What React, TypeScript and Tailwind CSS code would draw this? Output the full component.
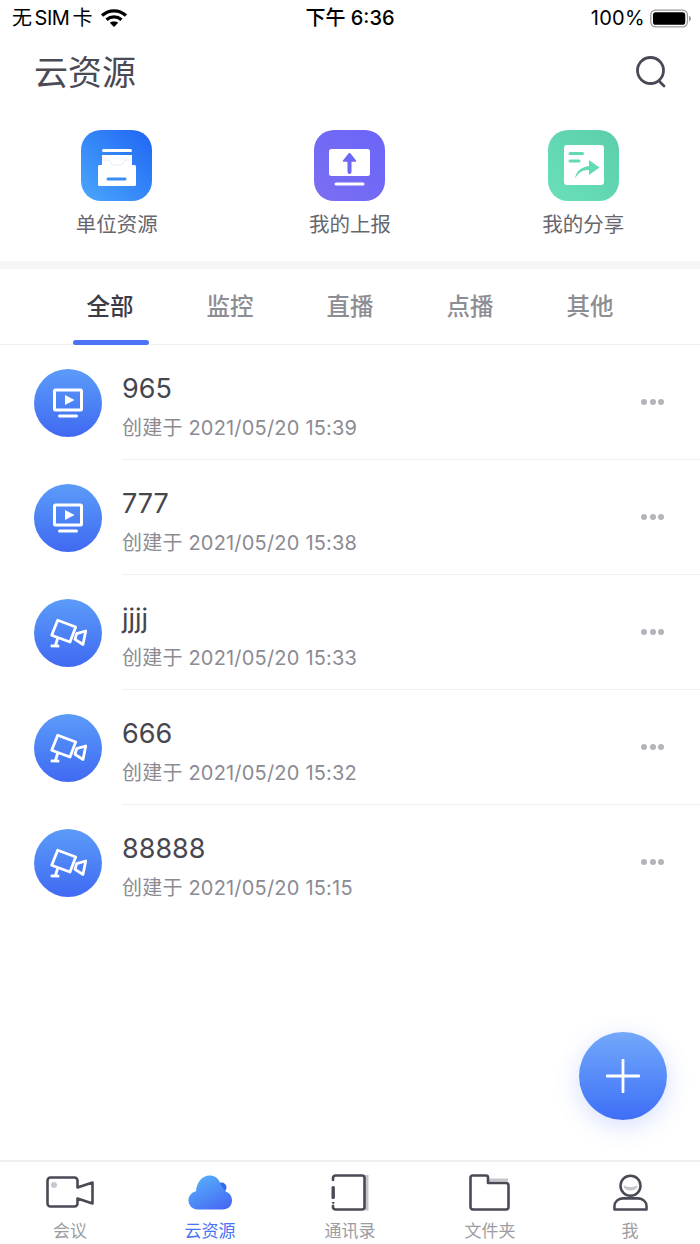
const font = 'font-["Inter","Noto_Sans_CJK_SC",sans-serif]';

function Wifi() {
  return (
    <svg width="28" height="20" viewBox="0 0 28 20" fill="none" stroke="#000" strokeWidth="3.2">
      <path d="M2 7.500C9 1.200 19 1.200 26 7.500" />
      <path d="M6.500 11.800C11 8 17 8 21.500 11.800" />
      <path d="M14 19L9.800 14.800C12 13 16 13 18.200 14.800Z" fill="#000" stroke="none" />
    </svg>
  );
}

function Battery() {
  return (
    <svg width="42" height="19" viewBox="0 0 44 20">
      <rect x="0.700" y="1.200" width="38.600" height="17.600" rx="5" fill="none" stroke="#9a9a9a" strokeWidth="1.300" />
      <rect x="3" y="3.400" width="34" height="13.200" rx="3" fill="#000" />
      <path d="M41 7v6c1.200-.4 2-1.600 2-3s-.8-2.600-2-3z" fill="#9a9a9a" />
    </svg>
  );
}

function SearchIcon() {
  return (
    <svg width="34" height="36" viewBox="0 0 34 36" fill="none" stroke="#4a4a56" strokeWidth="2.800" strokeLinecap="round">
      <circle cx="16.500" cy="16.500" r="13" />
      <path d="M25 27l5 5" />
    </svg>
  );
}

function UnitIcon() {
  return (
    <svg width="71" height="71" viewBox="0 0 71 71" fill="none">
      <rect x="21" y="19" width="30" height="3" rx="1.500" fill="#fff" />
      <path d="M21 25h30v11H21z" fill="#fff" />
      <rect x="17" y="35" width="38" height="21" rx="1.500" fill="#fff" />
      <path d="M22 30h6l3.500 5h9l3.500-5h6" stroke="#e4ebf6" strokeWidth="1" />
      <rect x="25.500" y="47.500" width="20" height="3" rx="1.500" fill="#3a8df5" />
    </svg>
  );
}

function ReportIcon() {
  return (
    <svg width="71" height="71" viewBox="0 0 71 71" fill="none">
      <rect x="15" y="19" width="41" height="27" rx="2.500" fill="#fff" />
      <rect x="20.500" y="52.500" width="30" height="3" rx="1.500" fill="#fff" />
      <path d="M35.500 30v12" stroke="#6d67f5" strokeWidth="4" strokeLinecap="round" />
      <path d="M35.500 23.500l6 7.500h-12z" fill="#6d67f5" stroke="#6d67f5" strokeWidth="1.500" strokeLinejoin="round" />
    </svg>
  );
}

function ShareIcon() {
  return (
    <svg width="71" height="71" viewBox="0 0 71 71" fill="none">
      <rect x="16" y="15" width="40" height="40" rx="3" fill="#fff" />
      <rect x="20.500" y="22" width="15.500" height="3" rx="1.500" fill="#63dab5" />
      <rect x="20.500" y="29.500" width="12" height="3" rx="1.500" fill="#63dab5" />
      <path d="M27 48.500c1-7 6-11.500 14-12.500v-6l10.500 7.500-10.500 7.500v-5c-6-.5-11 3-14 8.500z" fill="#63dab5" />
    </svg>
  );
}

function ScreenIcon() {
  return (
    <svg width="30" height="30" viewBox="0 0 30 30" fill="none">
      <rect x="1.500" y="2" width="27" height="20" stroke="#fff" strokeWidth="3" rx="1" />
      <path d="M12 8l9.500 5-9.500 5z" fill="#fff" transform="translate(0 -1)" />
      <rect x="5" y="26.500" width="20" height="3" rx="1.500" fill="#fff" />
    </svg>
  );
}

function CameraIcon() {
  return (
    <svg width="38" height="32" viewBox="0 0 38 32" fill="none" stroke="#fff" strokeWidth="2.800">
      <path d="M8.700 3.300L26.700 10 21 25 2.700 18.300z" strokeLinejoin="round" />
      <path d="M27.700 16.700L36.700 14 34 27.500 26 22.300z" strokeLinejoin="round" />
      <path d="M8.700 21L6.500 28.500M1.700 28.800L10.300 29.200" />
    </svg>
  );
}

function MeetingIcon() {
  return (
    <svg width="48" height="34" viewBox="0 0 48 34" fill="none">
      <circle cx="8" cy="9" r="3" fill="#c8c8cc" />
      <path d="M4.500 1.500h24a3 3 0 0 1 3 3v7l15-5v21l-15-5v5a3 3 0 0 1-3 3h-24a3 3 0 0 1-3-3v-23a3 3 0 0 1 3-3z" stroke="#4a4a56" strokeWidth="2.600" strokeLinejoin="round" />
    </svg>
  );
}

function CloudIcon() {
  return (
    <svg width="44" height="36" viewBox="0 0 44 36">
      <defs>
        <linearGradient id="cloudGrad" x1="0.200" y1="0" x2="0.850" y2="1">
          <stop offset="0" stopColor="#56b0fb" />
          <stop offset="1" stopColor="#4668f4" />
        </linearGradient>
      </defs>
      <circle cx="33.500" cy="12.500" r="5" fill="#2f6bf0" />
      <path d="M10 34.500C4 34.500.5 30 .5 25.500c0-5 3.700-8.500 7.500-9.200C8.500 7 14.500.5 21.500.5c5 0 8.500 2.500 10.500 7 .5 3 3 5.500 6.500 9.500 3.500 1 5.500 4.500 5.500 8.500 0 5-3.500 9-9.500 9z" fill="url(#cloudGrad)" />
    </svg>
  );
}

function ContactsIcon() {
  return (
    <svg width="40" height="38" viewBox="0 0 40 38" fill="none">
      <path d="M35 1h3.500v35.500H35z" fill="#c6c6ca" />
      <path d="M3 6V4a2.500 2.500 0 0 1 2.500-2.500H32A2.500 2.500 0 0 1 34.500 4v29a2.500 2.500 0 0 1-2.500 2.500H5.500A2.500 2.500 0 0 1 3 33v-1" stroke="#4a4a56" strokeWidth="2.600" strokeLinecap="round" />
      <rect x="1.500" y="12" width="3.400" height="13" rx="1.500" fill="#4a4a56" />
      <path d="M1.500 28h3.400l-1.700 2.500z" fill="#4a4a56" />
    </svg>
  );
}

function FolderIcon() {
  return (
    <svg width="42" height="38" viewBox="0 0 42 38" fill="none">
      <path d="M18 4.500h21v3H18z" fill="#c6c6ca" />
      <path d="M3.500 1.500H17a2 2 0 0 1 2 2V9h18a2.500 2.500 0 0 1 2.500 2.500V33a2.500 2.500 0 0 1-2.500 2.500H4A2.500 2.500 0 0 1 1.500 33V3.500a2 2 0 0 1 2-2z" stroke="#4a4a56" strokeWidth="2.600" strokeLinejoin="round" />
    </svg>
  );
}

function PersonIcon() {
  return (
    <svg width="35" height="39" viewBox="0 0 36 40" fill="none">
      <circle cx="18" cy="12" r="10.300" stroke="#4a4a56" strokeWidth="2.600" />
      <path d="M11.500 12.500c2 5 11 5 13 0-3 2-10 2-13 0z" fill="#c6c6ca" stroke="#c6c6ca" strokeWidth="1.400" strokeLinejoin="round" />
      <path d="M10 25h16c4.500 0 8.500 3.500 8.500 8v3.500h-33V33c0-4.500 4-8 8.500-8z" stroke="#4a4a56" strokeWidth="2.600" strokeLinejoin="round" />
    </svg>
  );
}

const tabs = ["全部", "监控", "直播", "点播", "其他"];
const rows = [
  { t: "965", d: "创建于 2021/05/20 15:39", k: "screen" },
  { t: "777", d: "创建于 2021/05/20 15:38", k: "screen" },
  { t: "jjjj", d: "创建于 2021/05/20 15:33", k: "camera" },
  { t: "666", d: "创建于 2021/05/20 15:32", k: "camera" },
  { t: "88888", d: "创建于 2021/05/20 15:15", k: "camera" },
];

function Row({ t, d, k, last }: { t: string; d: string; k: string; last: boolean }) {
  return (
    <div className="flex h-[115px]">
      <div className="w-[122px] shrink-0 pl-[34px] pt-[23.500px]">
        <div className="flex h-[68px] w-[68px] items-center justify-center rounded-full bg-gradient-to-b from-[#5c9bf9] to-[#4169f2]">
          {k === "screen" ? <ScreenIcon /> : <CameraIcon />}
        </div>
      </div>
      <div className={`flex flex-1 border-b pr-[36px] ${last ? "border-transparent" : "border-[#f0f0f2]"}`}>
        <div className="flex-1 pt-[27px]">
          <div className="h-[34px] text-[27px] leading-[34px] text-[#46464f]">{t}</div>
          <div className="mt-[8px] h-[28px] text-[20px] leading-[28px] tracking-[0.2px] text-[#8b8b93]">{d}</div>
        </div>
        <div className="flex items-center gap-[2.500px]">
          <span className="h-[6px] w-[6px] rounded-full bg-[#b4b4ba]" />
          <span className="h-[6px] w-[6px] rounded-full bg-[#b4b4ba]" />
          <span className="h-[6px] w-[6px] rounded-full bg-[#b4b4ba]" />
        </div>
      </div>
    </div>
  );
}

function Nav({ label, active, children }: { label: string; active?: boolean; children: React.ReactNode }) {
  return (
    <div className="flex flex-col items-center">
      <div className="mt-[9px] flex h-[44px] items-center justify-center">{children}</div>
      <div className={`mt-[4px] text-[17px] leading-[24px] ${active ? "text-[#4a74f5]" : "text-[#9c9ca2]"}`}>{label}</div>
    </div>
  );
}

export default function App() {
  return (
    <div className={`relative flex h-[1244px] w-[700px] flex-col overflow-hidden bg-white ${font}`}>
      <div className="flex h-[36px] items-center justify-between pl-[12px] pr-[8px] text-[20px] text-black">
        <div className="flex w-[200px] items-center gap-[8px]">
          <span className="tracking-[-0.5px] [word-spacing:-2px]">无 SIM 卡</span>
          <Wifi />
        </div>
        <span className="pr-[4px] font-medium">下午 6:36</span>
        <div className="flex w-[200px] items-center justify-end gap-[5px]">
          <span className="tracking-[0.3px]">100%</span>
          <Battery />
        </div>
      </div>

      <div className="flex h-[72px] items-center justify-between pl-[34px] pr-[32px]">
        <span className="pt-[2px] text-[34px] font-normal leading-[44px] text-[#4a4a54]">云资源</span>
        <SearchIcon />
      </div>

      <div className="grid h-[161px] grid-cols-3 border-b-[8px] border-[#f5f6f6] pt-[22px]">
        <div className="flex flex-col items-center">
          <div className="h-[71px] w-[71px] rounded-[20px] bg-gradient-to-tr from-[#4ca6fb] to-[#2264f3]"><UnitIcon /></div>
          <span className="mt-[10px] text-[20.500px] leading-[28px] text-[#66666e]">单位资源</span>
        </div>
        <div className="flex flex-col items-center">
          <div className="h-[71px] w-[71px] rounded-[20px] bg-gradient-to-tr from-[#7b6ff2] to-[#6a64f8]"><ReportIcon /></div>
          <span className="mt-[10px] text-[20.500px] leading-[28px] text-[#66666e]">我的上报</span>
        </div>
        <div className="flex flex-col items-center">
          <div className="h-[71px] w-[71px] rounded-[20px] bg-gradient-to-tr from-[#68e0ba] to-[#5ccdab]"><ShareIcon /></div>
          <span className="mt-[10px] text-[20.500px] leading-[28px] text-[#66666e]">我的分享</span>
        </div>
      </div>

      <div className="grid h-[76px] grid-cols-5 border-b border-[#f0f0f2] px-[50px]">
        {tabs.map((t, i) => (
          <div key={t} className="relative flex items-center justify-center">
            <span className={`text-[23.500px] font-medium ${i === 0 ? "text-[#3c3c46]" : "text-[#8d8d94]"}`}>{t}</span>
            {i === 0 && <div className="absolute bottom-[-1px] left-[23px] h-[5px] w-[76px] rounded-[3px] bg-[#4a74f5]" />}
          </div>
        ))}
      </div>

      <div className="flex-1">
        {rows.map((r, i) => (
          <Row key={i} t={r.t} d={r.d} k={r.k} last={i === rows.length - 1} />
        ))}
      </div>

      <div className="absolute left-[579px] top-[1032px] flex h-[88px] w-[88px] items-center justify-center rounded-full bg-gradient-to-b from-[#73a8fb] to-[#3f6ef6] shadow-[0_6px_24px_rgba(70,110,250,0.22)]">
        <svg width="34" height="34" viewBox="0 0 34 34" stroke="#fff" strokeWidth="2.800" strokeLinecap="round">
          <path d="M17 1v32M1 17h32" />
        </svg>
      </div>

      <div className="grid h-[84px] grid-cols-5 border-t-2 border-[#efeff0]">
        <Nav label="会议"><MeetingIcon /></Nav>
        <Nav label="云资源" active><CloudIcon /></Nav>
        <Nav label="通讯录"><ContactsIcon /></Nav>
        <Nav label="文件夹"><FolderIcon /></Nav>
        <Nav label="我"><PersonIcon /></Nav>
      </div>
    </div>
  );
}
